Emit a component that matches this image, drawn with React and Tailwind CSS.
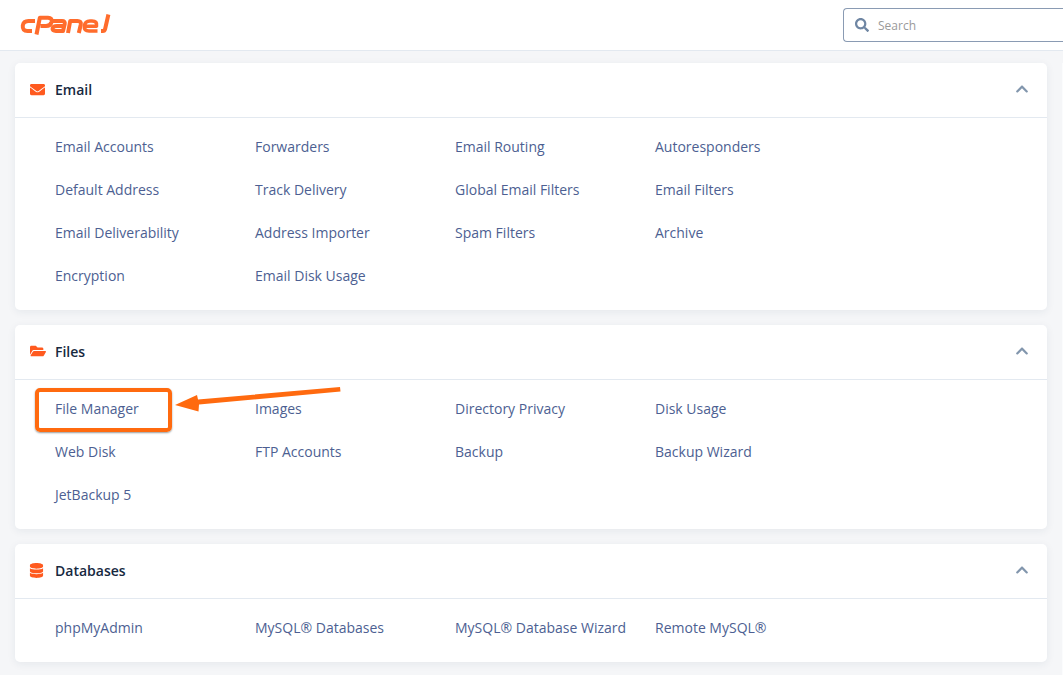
import React from "react";
import { FaEnvelope, FaFolderOpen, FaDatabase, FaSearch, FaChevronUp } from "react-icons/fa";

const sections = [
  { title: "Email", Icon: FaEnvelope, iconClass: "text-[15px]", items: ["Email Accounts","Forwarders","Email Routing","Autoresponders","Default Address","Track Delivery","Global Email Filters","Email Filters","Email Deliverability","Address Importer","Spam Filters","Archive","Encryption","Email Disk Usage"] },
  { title: "Files", Icon: FaFolderOpen, iconClass: "text-[16px]", items: ["File Manager","Images","Directory Privacy","Disk Usage","Web Disk","FTP Accounts","Backup","Backup Wizard","JetBackup 5"] },
  { title: "Databases", Icon: FaDatabase, iconClass: "text-[15px] -ml-[1px]", items: ["phpMyAdmin","MySQL® Databases","MySQL® Database Wizard","Remote MySQL®"] },
];

function Logo() {
  return (
    <svg width="92" height="22" viewBox="0 0 92 22" className="block" fill="none" stroke="#ff6c2c" strokeWidth="4" strokeLinejoin="round" strokeLinecap="butt">
      <path d="M15 7H8.5Q3.5 7 2.8 11.5Q2.2 17 7.5 17H12" />
      <path d="M16.5 20.5L19.8 3.8H28Q32.5 3.8 31.6 8Q30.6 12 26 12H20.5" />
      <path d="M33 7H42Q45.4 7 44.7 10L43 17H36Q32 17 32.6 14.2Q33.2 12 37 12H44" />
      <path d="M48 19L50.2 7H57.5Q61.5 7 60.8 10.5L58.8 19" />
      <path d="M65 12.2H76.5Q77.5 7 72 7H70Q65 7 64.4 12Q63.8 17 69 17H77.5" strokeWidth="3.6" />
      <path d="M81 17H82.8Q84.6 17 85.1 15L88.4 0.5" />
    </svg>
  );
}

function Card({ title, Icon, iconClass, items }) {
  return (
    <section className="bg-white rounded-[5px] shadow-[0_2px_8px_rgba(30,50,90,0.07)]">
      <header className="h-[55px] flex items-center border-b border-[#e3e9f0] pl-[15px] pr-[18px] pb-[2px]">
        <span className="w-[25px] flex items-center text-[#ff5a1f]"><Icon className={iconClass} /></span>
        <h2 className="text-[14px] font-semibold text-[#17293f]">{title}</h2>
        <FaChevronUp className="ml-auto text-[#8296ad] text-[14px]" />
      </header>
      <ul className="grid grid-cols-[200px_200px_200px_200px] pl-[40px] pt-[7px] pb-[13px]">
        {items.map((t) => (
          <li key={t} className="h-[43px] flex items-center text-[14px] text-[#4d5f92]">{t}</li>
        ))}
      </ul>
    </section>
  );
}

export default function App() {
  return (
    <div className="relative w-[1063px] h-[675px] overflow-hidden bg-[#f5f6f8] font-['Open_Sans',sans-serif]">
      <header className="h-[51px] bg-white border-b border-[#e3e9f0] flex items-center justify-between pl-[20px]">
        <Logo />
        <div className="w-[220px] h-[34px] border border-[#8a9bb3] border-r-0 rounded-l-[4px] flex items-center pl-[11px] gap-[9px]">
          <FaSearch className="text-[#6f86a3] text-[14px]" />
          <span className="text-[12px] text-[#9a9a9a] pt-[1px]">Search</span>
        </div>
      </header>
      <main className="pl-[15px] pr-[16px] pt-[12px] flex flex-col gap-[15px]">
        {sections.map((s) => <Card key={s.title} {...s} />)}
      </main>
      <div className="absolute right-0 top-[63px] bottom-0 w-[1px] bg-[#fbfcfd]" />
      <div className="absolute left-[35px] top-[388px] w-[137px] h-[44px] border-[4px] border-[#ff6a0f] rounded-[5px] shadow-[0_1px_2px_rgba(0,0,0,0.4)]" />
      <svg className="absolute left-[170px] top-[380px]" width="175" height="36" viewBox="0 0 175 36">
        <path d="M5 25L27 15L28 19.5L170 7L170.5 11.5L29 24.5L28.5 31.5Z" fill="#ff6a0f" />
      </svg>
    </div>
  );
}
